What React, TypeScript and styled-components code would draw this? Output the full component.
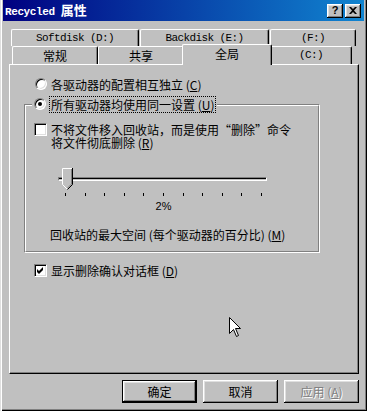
import React from "react";
import styled, { createGlobalStyle } from "styled-components";

const GlobalStyle = createGlobalStyle`
  html, body {
    margin: 0;
    padding: 0;
    background: #c0c0c0;
  }
  body {
    font-family: "Noto Sans CJK SC", "Liberation Sans", sans-serif;
    font-size: 12px;
    color: #000;
  }
`;

const Window = styled.div`
  position: relative;
  box-sizing: border-box;
  width: 367px;
  height: 411px;
  padding: 0 3px 3px 3px;
  background: #c0c0c0;
  box-shadow: inset 1px 0 #dfdfdf, inset 2px 0 #fff, inset -1px -1px #000,
    inset -2px -2px #808080;
  overflow: hidden;
`;

const TitleBar = styled.div`
  height: 21px;
  display: flex;
  align-items: center;
  justify-content: space-between;
  padding: 0 3px 0 2px;
  background: linear-gradient(to right, #000080, #1084d0);
  color: #fff;
`;

const Title = styled.div`
  font-weight: bold;
  font-size: 13px;
  line-height: 14px;
  white-space: pre;
  .latin {
    font-family: "Liberation Mono", monospace;
    font-size: 11px;
    letter-spacing: -0.4px;
  }
`;

const TitleButtons = styled.div`
  display: flex;
  gap: 2px;
`;

const CaptionButton = styled.div`
  box-sizing: border-box;
  width: 16px;
  height: 14px;
  background: #c0c0c0;
  box-shadow: inset -1px -1px #000, inset 1px 1px #fff, inset -2px -2px #808080,
    inset 2px 2px #dfdfdf;
  display: flex;
  align-items: center;
  justify-content: center;
  color: #000;
  font-family: "Liberation Sans", sans-serif;
  font-weight: bold;
  font-size: 11px;
  line-height: 11px;
`;

const Body = styled.div`
  padding: 8px 0 0 6px;
`;

const TabStrip = styled.div`
  position: relative;
  z-index: 2;
  height: 35px;
  display: flex;
  flex-direction: column;
`;

const TabRow = styled.div<{ $offset: number; $height: number; $gap: number }>`
  display: flex;
  align-items: flex-end;
  gap: ${(p) => p.$gap}px;
  height: ${(p) => p.$height}px;
  margin-left: ${(p) => p.$offset}px;
`;

const Tab = styled.div<{ $w: number; $h: number; $active?: boolean }>`
  box-sizing: border-box;
  width: ${(p) => p.$w}px;
  height: ${(p) => p.$h}px;
  flex: none;
  background: #c0c0c0;
  border-top: 1px solid #fff;
  border-left: 1px solid #fff;
  border-right: 1px solid #000;
  border-radius: 2px 2px 0 0;
  box-shadow: inset -1px 0 #808080;
  display: flex;
  align-items: center;
  justify-content: center;
  padding-bottom: ${(p) => (p.$active ? 3 : 0)}px;
  margin: ${(p) => (p.$active ? "0 -2px -1px -2px" : "0")};
  position: ${(p) => (p.$active ? "relative" : "static")};
  z-index: ${(p) => (p.$active ? 3 : "auto")};
  line-height: 13px;
  white-space: pre;
`;

const Mono = styled.span`
  font-family: "Liberation Mono", monospace;
  font-size: 11px;
  letter-spacing: -0.6px;
`;

const Panel = styled.div`
  position: relative;
  z-index: 1;
  box-sizing: border-box;
  width: 350px;
  height: 310px;
  background: #c0c0c0;
  border: 1px solid;
  border-color: #fff #000 #000 #fff;
  box-shadow: inset -1px -1px #808080;
  padding: 11px 0 0 14px;
`;

const OptionRow = styled.div<{ $indent?: number; $top?: number; $align?: string }>`
  display: flex;
  align-items: ${(p) => p.$align ?? "center"};
  gap: 4px;
  min-height: 16px;
  margin-left: ${(p) => p.$indent ?? 0}px;
  margin-top: ${(p) => p.$top ?? 0}px;
  line-height: 13px;
  white-space: pre;
`;

const Radio = styled.div<{ $checked?: boolean }>`
  box-sizing: border-box;
  width: 12px;
  height: 12px;
  flex: none;
  border-radius: 50%;
  background: #fff;
  border: 1px solid;
  border-color: #808080 #fff #fff #808080;
  box-shadow: inset 1px 1px #000, inset -1px -1px #dfdfdf;
  display: flex;
  align-items: center;
  justify-content: center;
  &::after {
    content: "";
    display: ${(p) => (p.$checked ? "block" : "none")};
    width: 4px;
    height: 4px;
    border-radius: 50%;
    background: #000;
  }
`;

const CheckBox = styled.div`
  box-sizing: border-box;
  width: 13px;
  height: 13px;
  flex: none;
  background: #fff;
  border: 1px solid;
  border-color: #808080 #fff #fff #808080;
  box-shadow: inset 1px 1px #000, inset -1px -1px #dfdfdf;
  display: flex;
  align-items: center;
  justify-content: center;
`;

const Focus = styled.span`
  outline: 1px dotted #000;
  outline-offset: 0;
  padding: 1px 1px;
`;

const Key = styled.span`
  text-decoration: underline;
`;

const Group = styled.div`
  position: relative;
  box-sizing: border-box;
  width: 296px;
  height: 149px;
  margin-top: 12px;
  border: 1px solid;
  border-color: #808080 #fff #fff #808080;
`;

const GroupInner = styled.div`
  box-sizing: border-box;
  height: 100%;
  border: 1px solid;
  border-color: #fff #808080 #808080 #fff;
  padding: 17px 0 0 8px;
`;

const GroupTitle = styled.div`
  position: absolute;
  top: -9px;
  left: 7px;
  padding: 0 2px;
  background: #c0c0c0;
`;

const SliderBox = styled.div`
  position: relative;
  width: 209px;
  height: 26px;
  margin: 18px 0 0 24px;
`;

const Track = styled.div`
  position: absolute;
  left: 0;
  right: 0;
  top: 10px;
  box-sizing: border-box;
  height: 4px;
  border-top: 1px solid #808080;
  border-left: 1px solid #808080;
  border-bottom: 1px solid #fff;
  border-right: 1px solid #fff;
  box-shadow: inset 0 1px #000;
  background: #c0c0c0;
`;

const Thumb = styled.svg`
  position: absolute;
  top: 1px;
`;

const Ticks = styled.div`
  display: flex;
  justify-content: space-between;
  width: 197px;
  height: 3px;
  margin-left: 31px;
`;

const Tick = styled.div`
  width: 1px;
  height: 3px;
  background: #000;
`;

const SliderValue = styled.div`
  width: 197px;
  margin: 4px 0 0 31px;
  text-align: center;
  line-height: 12px;
  font-family: "Liberation Sans", sans-serif;
  font-size: 11px;
`;

const Caption = styled.div`
  margin: 16px 0 0 16px;
  line-height: 13px;
  white-space: pre;
`;

const ButtonRow = styled.div`
  display: flex;
  justify-content: flex-end;
  gap: 6px;
  width: 350px;
  margin-top: 6px;
`;

const Button = styled.div<{ $default?: boolean; $disabled?: boolean }>`
  box-sizing: border-box;
  width: 75px;
  height: 23px;
  background: #c0c0c0;
  display: flex;
  align-items: center;
  justify-content: center;
  border: ${(p) => (p.$default ? "1px solid #000" : "none")};
  box-shadow: inset -1px -1px #000, inset 1px 1px #fff, inset -2px -2px #808080,
    inset 2px 2px #dfdfdf;
  color: ${(p) => (p.$disabled ? "#808080" : "#000")};
  text-shadow: ${(p) => (p.$disabled ? "1px 1px #fff" : "none")};
  white-space: pre;
`;

const Cursor = styled.svg`
  position: absolute;
  left: 229px;
  top: 317px;
  z-index: 5;
`;

const ticks = Array.from({ length: 11 }, (_, i) => i);
const value = 2;

export default function App() {
  const thumbLeft = Math.round((value / 100) * 198);
  return (
    <>
      <GlobalStyle />
      <Window lang="zh-CN">
        <TitleBar>
          <Title>
            <span className="latin">Recycled </span>属性
          </Title>
          <TitleButtons>
            <CaptionButton>?</CaptionButton>
            <CaptionButton>
              <svg width="8" height="7" viewBox="0 0 8 7">
                <path d="M0 0h2l2 2 2-2h2L5 3.5 8 7H6L4 5 2 7H0l3-3.5z" fill="#000" />
              </svg>
            </CaptionButton>
          </TitleButtons>
        </TitleBar>
        <Body>
          <TabStrip>
            <TabRow $offset={2} $height={17} $gap={1}>
              <Tab $w={128} $h={17}>
                <Mono>Softdisk (D:)</Mono>
              </Tab>
              <Tab $w={129} $h={17}>
                <Mono>Backdisk (E:)</Mono>
              </Tab>
              <Tab $w={86} $h={17}>
                <Mono>(F:)</Mono>
              </Tab>
            </TabRow>
            <TabRow $offset={3} $height={18} $gap={0}>
              <Tab $w={86} $h={18}>常规</Tab>
              <Tab $w={86} $h={18}>共享</Tab>
              <Tab $w={90} $h={21} $active>
                全局
              </Tab>
              <Tab $w={82} $h={18}>
                <Mono>(C:)</Mono>
              </Tab>
            </TabRow>
          </TabStrip>
          <Panel>
            <OptionRow $indent={11}>
              <Radio />
              <span>
                各驱动器的配置相互独立 (<Key>C</Key>)
              </span>
            </OptionRow>
            <Group>
              <GroupTitle>
                <OptionRow>
                  <Radio $checked />
                  <Focus>
                    所有驱动器均使用同一设置 (<Key>U</Key>)
                  </Focus>
                </OptionRow>
              </GroupTitle>
              <GroupInner>
                <OptionRow $align="flex-start">
                  <CheckBox />
                  <span>
                    不将文件移入回收站，而是使用“删除”命令
                    <br />
                    将文件彻底删除 (<Key>R</Key>)
                  </span>
                </OptionRow>
                <SliderBox>
                  <Track />
                  <Thumb
                    width="11"
                    height="22"
                    viewBox="0 0 11 22"
                    style={{ left: thumbLeft }}
                  >
                    <path d="M0.5 16.5V0.5H10.5V16.5L5.5 21.5Z" fill="#c0c0c0" />
                    <path d="M0.5 16.5V0.5H10" stroke="#fff" fill="none" />
                    <path d="M0.5 16.5L5 21" stroke="#fff" fill="none" />
                    <path d="M10.5 0V16.5L5.5 21.5" stroke="#000" fill="none" />
                    <path d="M9.5 1V16L5.5 20" stroke="#808080" fill="none" />
                  </Thumb>
                </SliderBox>
                <Ticks>
                  {ticks.map((t) => (
                    <Tick key={t} />
                  ))}
                </Ticks>
                <SliderValue>2%</SliderValue>
                <Caption>
                  回收站的最大空间 (每个驱动器的百分比) (<Key>M</Key>)
                </Caption>
              </GroupInner>
            </Group>
            <OptionRow $indent={10} $top={9}>
              <CheckBox>
                <svg width="7" height="7" viewBox="0 0 7 7">
                  <path d="M0 2L2 4L6 0V3L2 7L0 5Z" fill="#000" />
                </svg>
              </CheckBox>
              <span>
                显示删除确认对话框 (<Key>D</Key>)
              </span>
            </OptionRow>
          </Panel>
          <ButtonRow>
            <Button $default>确定</Button>
            <Button>取消</Button>
            <Button $disabled>
              应用 (<Key>A</Key>)
            </Button>
          </ButtonRow>
        </Body>
        <Cursor width="12" height="20" viewBox="0 0 12 20">
          <path
            d="M0.5 0.5V16.5L4.5 12.5L7.5 19.5L9.5 18.5L6.5 11.5H11.5Z"
            fill="#fff"
            stroke="#000"
            strokeLinejoin="miter"
          />
        </Cursor>
      </Window>
    </>
  );
}
